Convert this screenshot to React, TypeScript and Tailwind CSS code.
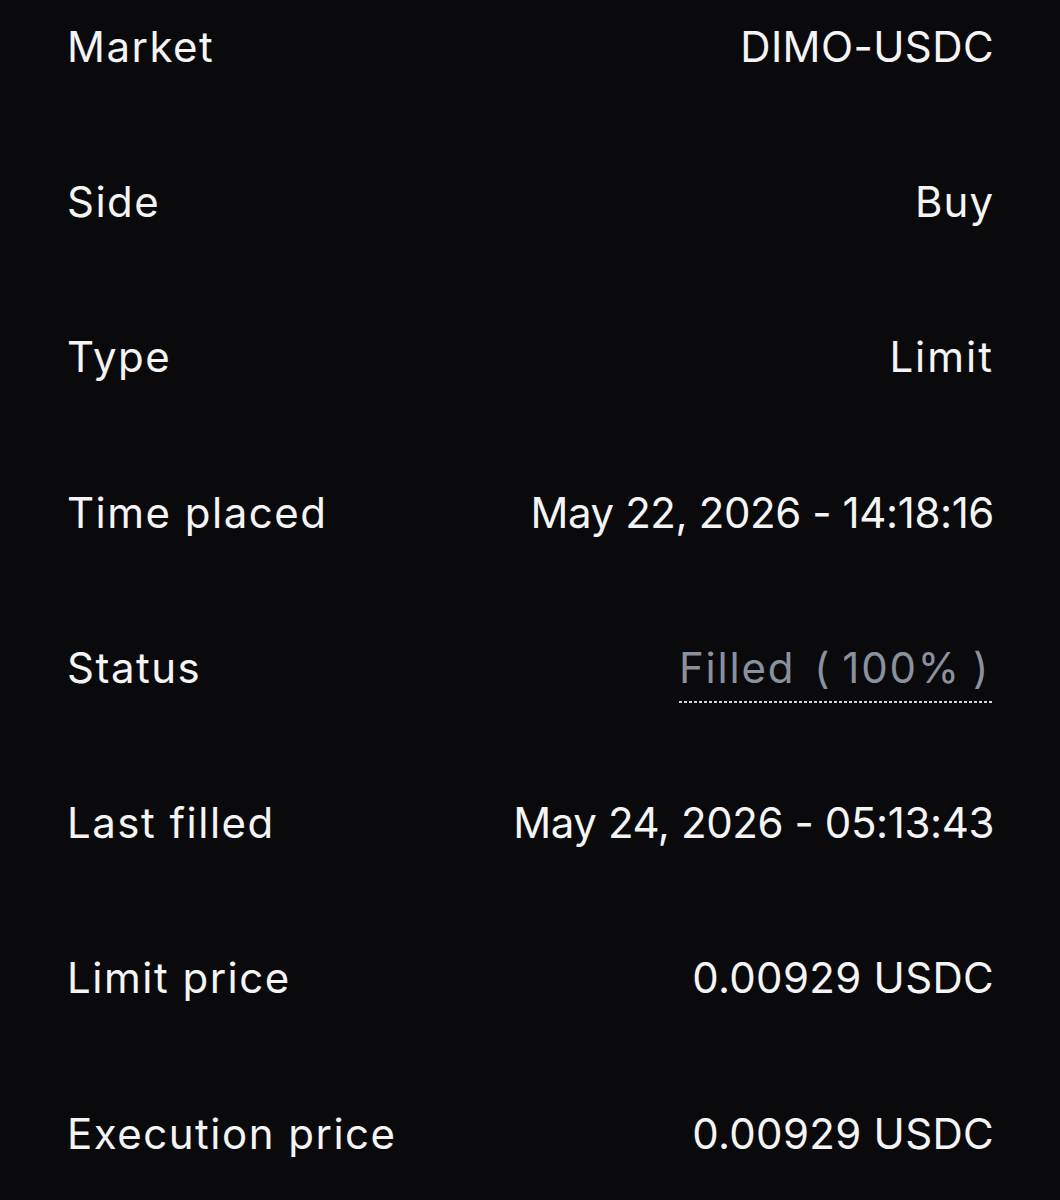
export default function App() {
    const rows: { label: string; value: string; tracking: string; status?: boolean }[] = [
        { label: "Market", value: "DIMO-USDC", tracking: "tracking-[0.4px]" },
        { label: "Side", value: "Buy", tracking: "tracking-[1px]" },
        { label: "Type", value: "Limit", tracking: "tracking-[2px]" },
        { label: "Time placed", value: "May 22, 2026 - 14:18:16", tracking: "tracking-[-0.4px]" },
        { label: "Status", value: "100%", tracking: "tracking-[1.8px]", status: true },
        { label: "Last filled", value: "May 24, 2026 - 05:13:43", tracking: "tracking-[-0.4px]" },
        { label: "Limit price", value: "0.00929 USDC", tracking: "tracking-[0.3px]" },
        { label: "Execution price", value: "0.00929 USDC", tracking: "tracking-[0.3px]" },
    ];

    return (
        <div
            className="w-[1060px] h-[1200px] overflow-hidden bg-[#0a0a0c] text-white"
            style={{ fontFamily: "Inter, 'Noto Sans CJK SC', sans-serif" }}
        >
            <div className="-mt-[31px] pl-[67px] pr-[66px] flex flex-col">
                {rows.map((row) => (
                    <div key={row.label} className="h-[155.3px] flex items-center justify-between text-[42px] leading-none">
                        <span className="text-[#f4f4f5] tracking-[1.5px]">{row.label}</span>
                        {row.status ? (
                            <span className={`relative text-[#8a919e] pr-[4px] ${row.tracking}`}>
                                Filled<span className="ml-[19px]">(</span>
                                <span className="ml-[11px] mr-[12px]">{row.value}</span>)
                                {/* dotted underline */}
                                <span className="absolute left-0 right-[1px] -bottom-[14px] h-[2px] bg-[repeating-linear-gradient(90deg,#d4d4d8_0_3px,transparent_3px_5px)]" />
                            </span>
                        ) : (
                            <span className={`text-[#f4f4f5] ${row.tracking}`}>{row.value}</span>
                        )}
                    </div>
                ))}
            </div>
        </div>
    );
}
